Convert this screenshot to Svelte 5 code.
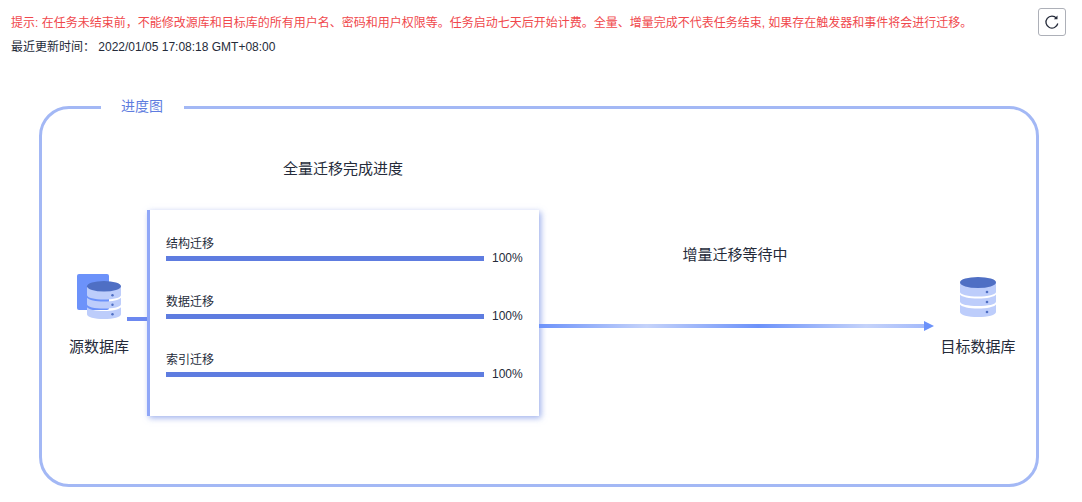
<script>
	const steps = [
		{ name: '结构迁移', percent: 100 },
		{ name: '数据迁移', percent: 100 },
		{ name: '索引迁移', percent: 100 }
	];
</script>

{#snippet cylinder()}
	<path d="M0 6v9c0 2.500 8 4.500 18 4.500s18-2 18-4.500V6z" fill="#bdcdfb" />
	<path d="M0 17.500c2 2.500 9 4 18 4s16-1.500 18-4v7c0 3-8 4.500-18 4.500S0 27.500 0 24.500z" fill="#bdcdfb" />
	<path d="M0 27.500c2 2.500 9 4 18 4s16-1.500 18-4V35c0 3-8 5-18 5S0 38 0 35z" fill="#bdcdfb" />
	<ellipse cx="18" cy="5.500" rx="18" ry="5.500" fill="#4f6fc4" />
	<circle cx="27" cy="15" r="1.300" fill="#4f6fc4" />
	<circle cx="27" cy="25" r="1.300" fill="#4f6fc4" />
	<circle cx="27" cy="35" r="1.300" fill="#4f6fc4" />
{/snippet}

<div class="page">
	<header class="top">
		<div class="info">
			<p class="notice">提示: 在任务未结束前，不能修改源库和目标库的所有用户名、密码和用户权限等。任务启动七天后开始计费。全量、增量完成不代表任务结束, 如果存在触发器和事件将会进行迁移。</p>
			<p class="updated">最近更新时间： 2022/01/05 17:08:18 GMT+08:00</p>
		</div>
		<button class="refresh" aria-label="刷新">
			<svg width="16" height="16" viewBox="0 0 16 16" fill="none">
				<path d="M12.600 4.300A6 6 0 1 0 13.800 9.500" stroke="#252b3a" stroke-width="1.300" />
				<path d="M13.500 1.600v3.700H9.800z" fill="#252b3a" />
			</svg>
		</button>
	</header>

	<fieldset class="progress">
		<legend>进度图</legend>
		<div class="flow">
			<div class="node source">
				<svg class="db" width="44" height="45" viewBox="0 0 44 45">
					<rect x="0" y="0" width="32" height="36" rx="2" fill="#6c92fa" />
					<g transform="translate(10 7) scale(0.944 0.95)">
						{@render cylinder()}
					</g>
				</svg>
				<span>源数据库</span>
			</div>

			<div class="full">
				<h4>全量迁移完成进度</h4>
				<div class="card">
					{#each steps as step}
						<div class="step">
							<div class="step-name">{step.name}</div>
							<div class="step-row">
								<div class="bar"><div class="bar-fill" style="width: {step.percent}%"></div></div>
								<span class="percent">{step.percent}%</span>
							</div>
						</div>
					{/each}
				</div>
			</div>

			<div class="incremental">
				<h4>增量迁移等待中</h4>
				<div class="arrow"></div>
			</div>

			<div class="node target">
				<svg class="db" width="36" height="40" viewBox="0 0 36 40">
					{@render cylinder()}
				</svg>
				<span>目标数据库</span>
			</div>
		</div>
	</fieldset>
</div>

<style>
	:global(body) {
		margin: 0;
		background: #fff;
	}

	.page {
		height: 502px;
		box-sizing: border-box;
		padding: 8px 16px 0 11px;
		font-family: "Liberation Sans", "Noto Sans CJK SC", sans-serif;
		font-size: 12px;
		color: #252b3a;
	}

	.top {
		display: flex;
		justify-content: space-between;
		align-items: flex-start;
		height: 88px;
	}

	.notice {
		margin: 6px 0 0;
		line-height: 18px;
		color: #f0484c;
	}

	.updated {
		margin: 6px 0 0;
		line-height: 18px;
	}

	.refresh {
		width: 28px;
		height: 28px;
		padding: 0;
		display: flex;
		align-items: center;
		justify-content: center;
		background: #fff;
		border: 1px solid #adb0b8;
		border-radius: 3px;
	}

	.progress {
		width: 1000px;
		height: 391px;
		box-sizing: border-box;
		margin: 0 0 0 28px;
		padding: 0;
		border: 3px solid #a3b8f5;
		border-radius: 30px;
	}

	legend {
		margin-left: 59px;
		padding: 0 21px 2px 20px;
		font-size: 14px;
		line-height: 20px;
		color: #5e7ce0;
	}

	.flow {
		display: flex;
		align-items: flex-start;
		padding-left: 17px;
	}

	.node {
		display: flex;
		flex-direction: column;
		align-items: center;
		font-size: 15px;
		line-height: 20px;
	}

	.node .db {
		display: block;
	}

	.source {
		width: 80px;
		margin-top: 156px;
		margin-right: 8px;
	}

	.source .db {
		margin-bottom: 18px;
	}

	.target {
		width: 88px;
		margin-top: 159px;
	}

	.target .db {
		margin-bottom: 20px;
	}

	h4 {
		margin: 0;
		font-size: 15px;
		font-weight: 400;
		line-height: 20px;
		text-align: center;
	}

	.full {
		width: 392px;
		padding-top: 41px;
	}

	.card {
		position: relative;
		height: 206px;
		box-sizing: border-box;
		margin-top: 31px;
		padding: 26px 16px 0 16px;
		border-left: 3px solid #8fa6f7;
		background: #fff;
		box-shadow: 2px 2px 6px rgba(94, 124, 224, 0.6);
	}

	.card::before {
		content: "";
		position: absolute;
		left: -23px;
		top: 107px;
		width: 20px;
		height: 4px;
		background: #6c88f0;
	}

	.step {
		height: 58px;
	}

	.step-name {
		line-height: 17px;
		margin-bottom: -3px;
	}

	.step-row {
		display: flex;
		align-items: center;
		gap: 8px;
		height: 16px;
	}

	.bar {
		width: 318px;
		height: 5px;
		background: #e5e9f5;
	}

	.bar-fill {
		height: 100%;
		background: #5e7ce0;
	}

	.percent {
		line-height: 16px;
	}

	.incremental {
		width: 395px;
		padding-top: 127px;
	}

	.incremental h4 {
		padding-right: 3px;
	}

	.arrow {
		position: relative;
		height: 4px;
		margin-top: 59px;
		margin-right: 10px;
		background: linear-gradient(90deg, #6c92fa 0%, #c5d3fa 28%, #6c92fa 57%, #c5d3fa 85%, #a5bbfb 100%);
	}

	.arrow::after {
		content: "";
		position: absolute;
		right: -10px;
		top: -3px;
		border-left: 10px solid #6c92fa;
		border-top: 5px solid transparent;
		border-bottom: 5px solid transparent;
	}
</style>
